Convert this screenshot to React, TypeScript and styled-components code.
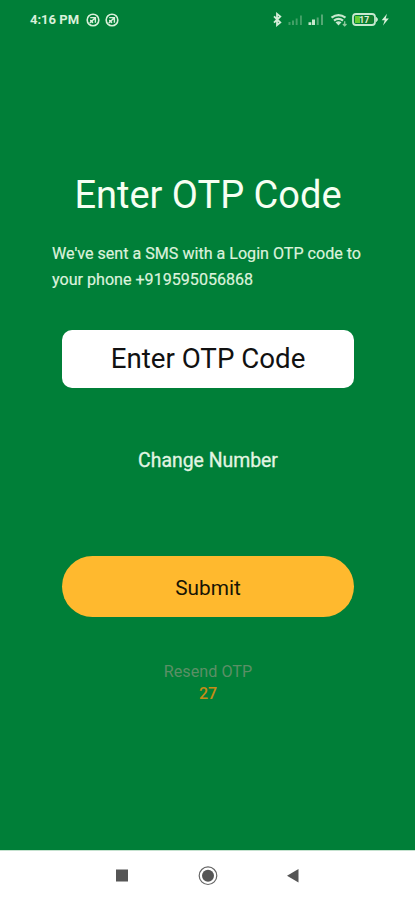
import React from 'react';
import styled, { createGlobalStyle } from 'styled-components';

const GlobalStyle = createGlobalStyle`
  * { box-sizing: border-box; }
  body { margin: 0; background: #007f38; font-family: Roboto, "Liberation Sans", sans-serif; }
`;

const Screen = styled.div`
  width: 415px;
  height: 900px;
  display: flex;
  flex-direction: column;
  background: #007f38;
  overflow: hidden;
`;

const StatusBar = styled.header`
  height: 40px;
  padding: 0 25px 0 30px;
  display: flex;
  align-items: center;
  justify-content: space-between;
  color: #d9f0da;
`;

const StatusGroup = styled.div<{ $gap: number }>`
  display: flex;
  align-items: center;
  gap: ${({ $gap }) => $gap}px;
  svg { display: block; }
`;

const Clock = styled.span`
  width: 50px;
  font-size: 13px;
  font-weight: 700;
  line-height: 16px;
  white-space: nowrap;
`;

const Content = styled.main`
  flex: 1;
  padding-left: 1px;
  display: flex;
  flex-direction: column;
  align-items: center;
`;

const Title = styled.h1`
  margin: 132px 0 0;
  font-size: 38px;
  font-weight: 400;
  line-height: 46px;
  color: #f6fff2;
  white-space: nowrap;
`;

const Message = styled.p`
  width: 312px;
  margin: 23px 0 0;
  font-size: 16.1px;
  line-height: 26px;
  color: #dcf2dc;
  -webkit-text-stroke: 0.2px #dcf2dc;
  white-space: nowrap;
`;

const CodeInput = styled.input`
  width: 292px;
  height: 58px;
  margin: 37px 0 0;
  padding: 0;
  border: 0;
  border-radius: 10px;
  background: #fff;
  font: 400 27.7px/58px Roboto, sans-serif;
  text-align: center;
  color: #111;
  outline: none;
  &::placeholder { color: #111; opacity: 1; }
`;

const ChangeLink = styled.button`
  margin: 61px 0 0;
  padding: 0;
  border: 0;
  background: none;
  font: 400 19.4px/24px Roboto, sans-serif;
  color: #e2f5e2;
  -webkit-text-stroke: 0.3px #e2f5e2;
`;

const SubmitButton = styled.button`
  width: 292px;
  height: 61px;
  margin: 83px 0 0;
  padding: 2px 0 0;
  border: 0;
  border-radius: 31px;
  background: #ffb92e;
  font: 400 20.8px/24px Roboto, sans-serif;
  color: #171405;
`;

const Resend = styled.span`
  margin-top: 44px;
  font-size: 16.2px;
  line-height: 22px;
  color: #5b8f66;
`;

const Countdown = styled.span`
  font-size: 16px;
  font-weight: 500;
  line-height: 22px;
  color: #c68c16;
`;

const NavBar = styled.nav`
  height: 50px;
  background: #fff;
  border-top: 1px solid #c5e2cf;
  display: flex;
  justify-content: center;
  svg { display: block; }
`;

const AppBadge = () => (
  <svg width="14" height="14" viewBox="0 0 14 14" fill="none" stroke="currentColor">
    <circle cx="7" cy="7" r="5.8" strokeWidth="1.6" />
    <path d="M4.2 4.6h5.2v5.2M3.8 10l5.3-5M4 7.5q2.2 0 2.7 2.7" strokeWidth="1.4" />
  </svg>
);

const StatusIcons = () => (
  <svg width="120" height="20" viewBox="270 10 120 20" fill="none">
    <path d="M274 16.3l6.3 6.2-3.3 2.7V13.8l3.3 2.7-6.3 6.2" stroke="#d3edd8" strokeWidth="1.8" />
    <g fill="#43a067">
      <path d="M288.5 22h2v3h-2zM292 20.5h2v4.5h-2zM295.7 18.5h1.9V25h-1.9zM300 15.5h1.9V25H300z" />
    </g>
    <path d="M308.5 22.2h2.8V25h-2.8zM312 19.5h3V25h-3z" fill="#c8e8ce" />
    <path d="M316.7 17.5h2V25h-2zM321 14.5h2V25h-2z" fill="#55a774" />
    <path d="M331.5 17.7q7-5.2 14 0M334 20.6q4.5-3.5 9 0" stroke="#c8e8ce" strokeWidth="2.3" />
    <path d="M335.5 22.2q3-1.8 6 0l-3 3.3z" fill="#c8e8ce" />
    <path d="M344.7 21.3v4.5m-1.8-1.8 1.8 1.8 1.8-1.8" stroke="#91c99f" strokeWidth="1.3" />
    <rect x="353" y="14" width="22" height="11" rx="3" stroke="#c8e8ce" strokeWidth="1.8" />
    <path d="M355 16h5v7h-5z" fill="#67cc35" />
    <path d="M360 16h13v7h-13z" fill="#167d2e" />
    <path d="M376.5 17.5q2 2 0 4z" fill="#c8e8ce" stroke="#c8e8ce" />
    <text x="364.3" y="22.7" textAnchor="middle" fill="#e1f4dc" fontFamily="Roboto, sans-serif" fontSize="8.6" fontWeight="700">17</text>
    <path d="M387 13.8l-5.3 6.5h3l-1.7 5.2 5.8-7h-3.1z" fill="#d9f0da" />
  </svg>
);

const NavIcons = () => (
  <svg width="415" height="49" viewBox="0 851 415 49">
    <rect x="116" y="869.5" width="12" height="12" fill="#555" />
    <circle cx="208" cy="875.7" r="8.8" fill="none" stroke="#666" strokeWidth="1.2" />
    <circle cx="208" cy="875.7" r="6" fill="#555" />
    <path d="M298.5 869v13.5L287 875.7z" fill="#555" />
  </svg>
);

export default function App() {
  return (
    <>
      <GlobalStyle />
      <Screen>
        <StatusBar>
          <StatusGroup $gap={5.5}>
            <Clock>4:16 PM</Clock>
            <AppBadge />
            <AppBadge />
          </StatusGroup>
          <StatusGroup $gap={0}><StatusIcons /></StatusGroup>
        </StatusBar>
        <Content>
          <Title>Enter OTP Code</Title>
          <Message>We've sent a SMS with a Login OTP code to<br />your phone +919595056868</Message>
          <CodeInput placeholder="Enter OTP Code" aria-label="OTP code" />
          <ChangeLink>Change Number</ChangeLink>
          <SubmitButton>Submit</SubmitButton>
          <Resend>Resend OTP</Resend>
          <Countdown>27</Countdown>
        </Content>
        <NavBar><NavIcons /></NavBar>
      </Screen>
    </>
  );
}
